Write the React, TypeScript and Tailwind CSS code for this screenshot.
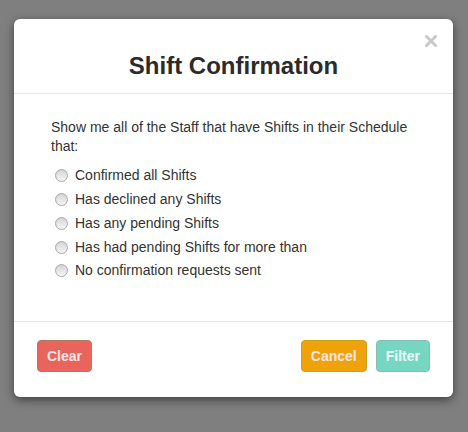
const options = [
  'Confirmed all Shifts',
  'Has declined any Shifts',
  'Has any pending Shifts',
  'Has had pending Shifts for more than',
  'No confirmation requests sent',
]

function Radio() {
  return (
    <span className="inline-block h-[13px] w-[13px] shrink-0 rounded-full border border-[#a9a9a9] bg-gradient-to-b from-[#d4d4d4] to-[#f6f6f6]" />
  )
}

export default function App() {
  return (
    <div className="h-[432px] w-[468px] overflow-hidden bg-[#7f7f7f] pl-[14px] pt-[19px] font-['Liberation_Sans',Arial,sans-serif] text-[#333]">
      <div className="relative flex h-[378px] w-[439px] flex-col rounded-[6px] bg-white shadow-[0_3px_10px_rgba(0,0,0,0.5)]">
        {/* header */}
        <div className="flex h-[75px] items-end justify-center border-b border-[#e5e5e5] pb-[12px]">
          <h1 className="text-[24px] font-bold leading-[30px] text-[#2b2b2b]">Shift Confirmation</h1>
        </div>
        <button className="absolute right-[16px] top-[16px] flex h-[12px] w-[12px] items-center justify-center">
          <svg width="12" height="12" viewBox="0 0 12 12">
            <path d="M1.5 1.5 L10.5 10.5 M10.5 1.5 L1.5 10.5" stroke="#c9c9c9" strokeWidth="3" strokeLinecap="square" />
          </svg>
        </button>

        {/* body */}
        <div className="flex-1 pl-[37px] pr-[40px] pt-[24px]">
          <p className="text-[14px] leading-[19px]">
            Show me all of the Staff that have Shifts in their Schedule that:
          </p>
          <div className="mt-[8px] flex flex-col pl-[4px]">
            {options.map((o) => (
              <label key={o} className="flex h-[23.75px] items-center gap-[7px] text-[14px]">
                <Radio />
                <span>{o}</span>
              </label>
            ))}
          </div>
        </div>

        {/* footer */}
        <div className="flex h-[76px] items-start justify-between border-t border-[#e5e5e5] px-[23px] pt-[18px]">
          <button className="h-[32px] rounded-[4px] border border-[#b07a62] bg-[#e8645c] px-[9px] text-[14px] font-bold text-[#fde6ea]">
            Clear
          </button>
          <div className="flex gap-[9px]">
            <button className="h-[32px] rounded-[4px] border border-[#c9a21a] bg-[#f0a20a] px-[9px] text-[14px] font-bold text-[#fde6ea]">
              Cancel
            </button>
            <button className="h-[32px] rounded-[4px] border border-[#86bfb2] bg-[#76d6c2] px-[9px] text-[14px] font-bold text-[#e6fffb]">
              Filter
            </button>
          </div>
        </div>
      </div>
    </div>
  )
}
